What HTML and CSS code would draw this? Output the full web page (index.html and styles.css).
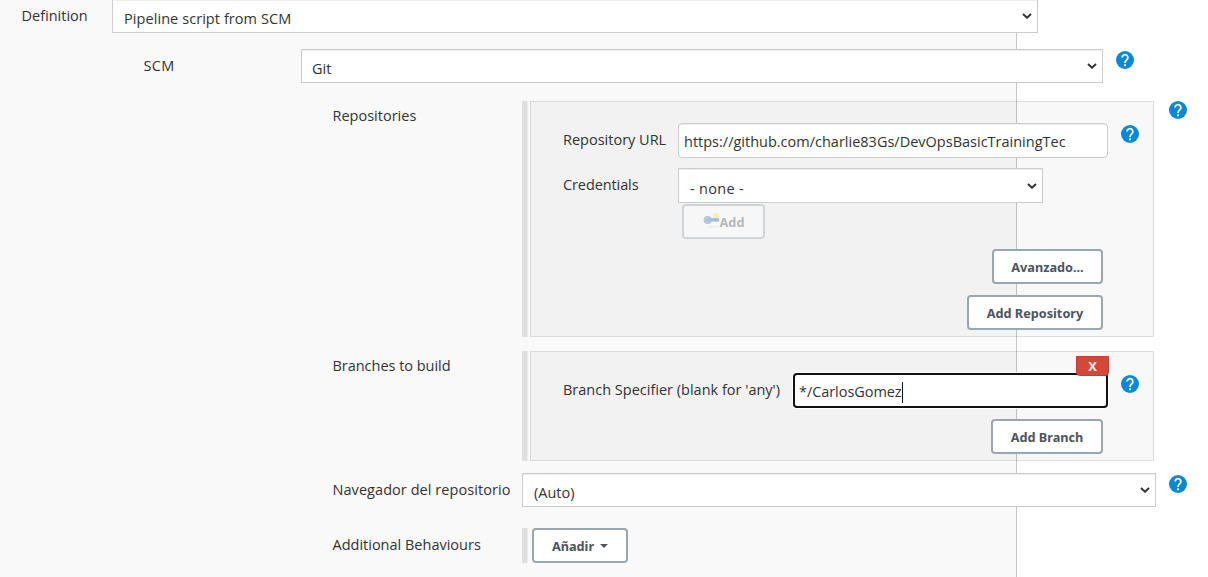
FILE: index.html
```
<!DOCTYPE html>
<html lang="es">
<head>
<meta charset="utf-8">
<title>Pipeline</title>
<link rel="stylesheet" href="styles.css">
</head>
<body>
<svg class="defs" width="0" height="0">
  <symbol id="help" viewBox="0 0 24 24"><circle cx="12" cy="12" r="12" fill="#0788d9"/><path d="M8.2 8.8a3.8 3.8 0 1 1 6.6 2.5c-1.5 1.5-2.8 1.9-2.8 4.7" fill="none" stroke="#fff" stroke-width="2.4"/><path d="M10.8 17.7h2.5v2.5h-2.5z" fill="#fff"/></symbol>
  <symbol id="chevron" viewBox="0 0 10 6"><path d="M1 1l4 3.7L9 1" fill="none" stroke="#333" stroke-width="2"/></symbol>
</svg>
<main class="section">
  <div class="row row-definition">
    <div class="label">Definition</div>
    <div class="select"><span class="t-pipeline">Pipeline script from SCM</span><svg class="chevron"><use href="#chevron"/></svg></div>
  </div>
  <div class="row row-scm">
    <div class="label">SCM</div>
    <div class="select"><span>Git</span><svg class="chevron"><use href="#chevron"/></svg></div>
    <svg class="help"><use href="#help"/></svg>
  </div>
  <div class="row row-repos">
    <div class="label">Repositories</div>
    <div class="handle"></div>
    <div class="chunk">
      <div class="field">
        <div class="name">Repository URL</div>
        <div class="input"><span class="t-link">https://github.com/charlie83Gs/DevOpsBasicTrainingTec</span></div>
        <svg class="help"><use href="#help"/></svg>
      </div>
      <div class="field field-credentials">
        <div class="name t-cred">Credentials</div>
        <div class="select"><span class="t-none">- none -</span><svg class="chevron"><use href="#chevron"/></svg></div>
      </div>
      <div class="button button-add"><svg class="key" viewBox="0 0 18 18"><ellipse cx="10" cy="15.5" rx="6" ry="1" fill="#ececec"/><circle cx="13.8" cy="4" r="3" fill="#f3efb0"/><circle cx="5" cy="8.5" r="4.3" fill="#b4c6dd"/><path d="M7 6.5h10v3.6H7z" fill="#a6bbd5"/></svg><span>Add</span></div>
      <div class="actions">
        <div class="button button-advanced"><span>Avanzado...</span></div>
        <div class="button button-repository"><span>Add Repository</span></div>
      </div>
    </div>
    <svg class="help"><use href="#help"/></svg>
  </div>
  <div class="row row-branches">
    <div class="label t-branches">Branches to build</div>
    <div class="handle"></div>
    <div class="chunk">
      <div class="field">
        <div class="name">Branch Specifier (blank for 'any')</div>
        <div class="input focused"><span class="t-carlos">*/CarlosGomez</span><i class="caret"></i><div class="delete">X</div></div>
        <svg class="help"><use href="#help"/></svg>
      </div>
      <div class="actions">
        <div class="button button-branch"><span>Add Branch</span></div>
      </div>
    </div>
  </div>
  <div class="row row-browser">
    <div class="label t-nav">Navegador del repositorio</div>
    <div class="select"><span>(Auto)</span><svg class="chevron"><use href="#chevron"/></svg></div>
    <svg class="help"><use href="#help"/></svg>
  </div>
  <div class="row row-behaviours">
    <div class="label">Additional Behaviours</div>
    <div class="handle"></div>
    <div class="button button-menu"><span>Añadir</span><i class="arrow"></i></div>
  </div>
</main>
</body>
</html>
```
FILE: styles.css
```
* { box-sizing: border-box; }
body {
  margin: 0;
  background: #fff;
  color: #333;
  font: 14.5px/20px "Open Sans", "Noto Sans", sans-serif;
  overflow: hidden;
}
.defs { position: absolute; }
.section {
  width: 1017px;
  height: 577px;
  background: #f9f9f9;
  border-right: 1px solid #c5c5c5;
  display: flow-root;
  white-space: nowrap;
}
.row { display: flex; align-items: flex-start; width: 1208px; }
.label { flex: none; padding: 5px 0 0 332.5px; width: 522px; }
.select {
  flex: none;
  display: flex;
  justify-content: space-between;
  height: 34px;
  padding: 9px 5px 0 10px;
  background: #fff;
  border: 1px solid #ccc;
  box-shadow: inset 0 1px 1px rgba(0, 0, 0, .075);
}
.chevron { width: 10px; height: 6px; margin-top: 4px; }
.help { flex: none; width: 18px; height: 18px; }
.handle { flex: none; width: 6px; margin-right: 2px; align-self: stretch; background: #dfdfdf; border-right: 1px solid #ececec; }
.chunk {
  flex: none;
  width: 624px;
  background: rgba(0, 0, 0, .027);
  border: 1px solid rgba(0, 0, 0, .1);
}
.field { display: flex; margin: 21px 0 0 32px; }
.name { flex: none; width: 115px; padding-top: 7px; }
.input {
  flex: none;
  width: 430px;
  height: 35px;
  margin-right: 13px;
  padding: 8px 5px 0;
  border: 1px solid #ccc;
  border-radius: 4px;
  background: #fff;
  box-shadow: inset 0 1px 1px rgba(0, 0, 0, .075);
}
.field .help { margin-top: 2px; }
.button {
  display: flex;
  align-items: center;
  justify-content: center;
  height: 35px;
  border: 2px solid #9ba7af;
  border-radius: 4px;
  background: #fff;
  color: #4d545d;
  font: bold 12.7px/20px "Noto Sans", sans-serif;
}
.actions { display: flex; flex-direction: column; align-items: flex-end; gap: 11px; padding-right: 50px; }
.t-pipeline { letter-spacing: .07px; }
.t-cred { letter-spacing: -.1px; }
.t-none { letter-spacing: .3px; }
.t-nav { letter-spacing: .06px; }
.t-branches { letter-spacing: -.03px; }
.t-carlos { letter-spacing: -.06px; }

.row-definition { margin-top: -1px; }
.row-definition .label { width: 112px; padding: 7px 0 0 21.5px; }
.row-definition .select { width: 926px; padding-left: 11px; }
.row-scm { margin-top: 16px; }
.row-scm .label { width: 301px; padding: 7px 0 0 143.5px; letter-spacing: .3px; }
.row-scm .select { width: 802px; }
.row-scm .help { margin: 2px 0 0 13px; }
.row-repos { margin-top: 18px; height: 236px; }
.row-repos .chunk { height: 236px; }
.row-repos > .help { margin-left: 15px; }
.field-credentials { margin-top: 10px; }
.field-credentials .select { width: 365px; height: 35px; padding-top: 10px; padding-left: 11px; }
.button-add { width: 83px; margin: 1px 0 0 151px; border-color: #d1d5d8; background: #f7f7f7; color: #b5b8bb; }
.key { width: 17px; height: 17px; margin-bottom: 3px; }
.row-repos .actions { margin-top: 10px; }
.button-advanced { width: 111px; }
.button-repository { width: 136px; }
.row-branches { margin-top: 14px; height: 110px; }
.row-branches .chunk { height: 110px; }
.row-branches .name { width: 230px; }
.row-branches .input { width: 315px; display: flex; }
.row-branches .focused {
  position: relative;
  padding: 7px 4px 0;
  border: 2px solid #111;
  box-shadow: 0 0 0 1px #fff;
}
.caret { width: 1px; height: 21px; background: #111; }
.delete {
  position: absolute;
  top: -19px;
  right: -3px;
  width: 33px;
  height: 20px;
  border: 1px solid #c23f32;
  border-radius: 0 0 4px 4px;
  background: #d24939;
  color: #eee;
  font: bold 13px/19px "Noto Sans", sans-serif;
  text-align: center;
}
.row-branches .actions { margin-top: 11px; }
.button-branch { width: 112px; }
.row-browser { margin-top: 12px; }
.row-browser .label { padding-top: 7px; }
.row-browser .select { width: 634px; padding-left: 11px; }
.row-browser .help { margin: 2px 0 0 13px; }
.row-behaviours { margin-top: 21px; height: 35px; }
.row-behaviours .label { padding-top: 7px; }
.row-behaviours .handle { margin-right: 4px; }
.button-menu { width: 96px; gap: 6px; }
.arrow { border: 4px solid transparent; border-top-color: currentColor; border-bottom: 0; }
```
